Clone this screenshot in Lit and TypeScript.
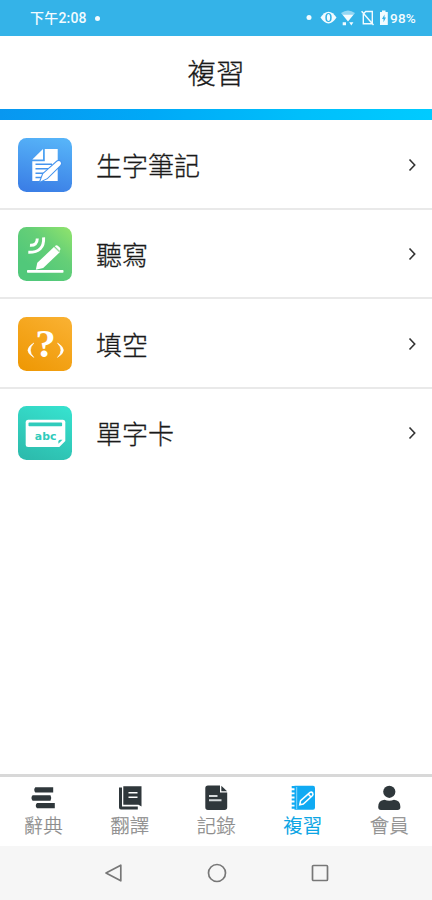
import { LitElement, html, css, svg } from "lit";
import { customElement } from "lit/decorators.js";
import { classMap } from "lit/directives/class-map.js";

const pencilNote = html`<svg class="tile" viewBox="0 0 54 54">
  <defs><linearGradient id="g" x1="0.6" y1="0" x2="0.4" y2="1"><stop offset="0" stop-color="#56b3f8"/><stop offset="1" stop-color="#3b7fe6"/></linearGradient></defs>
  <rect width="54" height="54" rx="8.5" fill="url(#g)"/>
  <path d="M14.3 23.2V43H39.7V11H26.8V23.2Z" fill="#fff"/>
  <path d="M14.3 21.4L25 11V21.4Z" fill="#fff"/>
  <path d="M17.5 26.2H34M17.5 30.7H30M17.5 35.2H26M17.5 39.5H23" stroke="#4594ee" stroke-width="1.5"/>
  <path d="M22.3 43.4L25.1 36.1L39.2 23.4Q41.3 22.2 42.6 24Q43.7 25.8 42.2 27.2L29 40.2Z" fill="#fff" stroke="#4594ee" stroke-width="2.2" paint-order="stroke"/>
</svg>`;

const dictation = html`<svg class="tile" viewBox="0 0 54 54">
  <defs><linearGradient id="g" x1="1" y1="0" x2="0.3" y2="0.8"><stop offset="0" stop-color="#92e46c"/><stop offset="0.5" stop-color="#65cf77"/><stop offset="1" stop-color="#51c87a"/></linearGradient></defs>
  <rect width="54" height="54" rx="8.5" fill="url(#g)"/>
  <g fill="none" stroke="#fff" stroke-width="3"><path d="M12 18.3Q19.2 18.8 19.3 11.5"/><path d="M10.3 25.3Q26.5 25.6 25.6 10.3"/></g>
  <path d="M17.8 42.8L19.3 35.8L36.2 19.8L42 25L25.2 41Z" fill="#fff"/>
  <path d="M36.8 19.2L37.7 18.4Q38.8 17.8 39.8 18.7L42 20.8Q43 22 42 23.2L41.8 24Z" fill="#fff"/>
  <path d="M36 20.2L41.2 25.2" stroke="#76d474" stroke-width=".5"/>
  <rect x="9" y="43" width="36.5" height="2.8" rx=".8" fill="#fff"/>
</svg>`;

const blank = html`<svg class="tile" viewBox="0 0 54 54">
  <defs><linearGradient id="g" x1="0.8" y1="0" x2="0.2" y2="1"><stop offset="0" stop-color="#f9b030"/><stop offset="0.5" stop-color="#f4a41a"/><stop offset="1" stop-color="#ef9906"/></linearGradient></defs>
  <rect width="54" height="54" rx="8.5" fill="url(#g)"/>
  <text class="question" x="27.4" y="39.5" text-anchor="middle">?</text>
  <path d="M15.8 26Q4 33.3 15.8 40.4Q8.8 33.3 15.8 26ZM39.5 26Q51.3 33.3 39.5 40.4Q46.5 33.3 39.5 26Z" fill="#fff" stroke="#fff" stroke-width=".6"/>
</svg>`;

const card = html`<svg class="tile" viewBox="0 0 54 54">
  <defs><linearGradient id="g" x1="0.7" y1="0" x2="0.3" y2="1"><stop offset="0" stop-color="#36e0cd"/><stop offset="1" stop-color="#2dbcad"/></linearGradient></defs>
  <rect width="54" height="54" rx="8.5" fill="url(#g)"/>
  <path d="M10.2 13.7H44.8Q47.3 13.7 47.3 16.2V35L41.3 41H10.2Q7.7 41 7.7 38.5V16.2Q7.7 13.7 10.2 13.7Z" fill="#fff"/>
  <rect x="10.5" y="16.6" width="33.6" height="3.7" rx=".8" fill="#30cbbb"/>
  <text class="abc" x="27.6" y="34" text-anchor="middle" textLength="21.5" lengthAdjust="spacingAndGlyphs">abc</text>
  <path d="M40.4 37.8V35.5Q40.4 33.7 42.2 33.7H44.5Z" fill="#30cbbb"/>
</svg>`;

const rows = [
  { icon: pencilNote, label: "生字筆記" },
  { icon: dictation, label: "聽寫" },
  { icon: blank, label: "填空" },
  { icon: card, label: "單字卡" },
];

const tabs = [
  {
    label: "辭典",
    icon: svg`<path d="M5.3 2.2H23.2V7.5H5.3Q3.2 4.8 5.3 2.2ZM2.6 10.3H20.5Q22 13 20.5 15.7H2.6Q.3 13 2.6 10.3ZM7 18H24.8V23.3H7Q4.5 20.7 7 18Z"/>`,
  },
  {
    label: "翻譯",
    icon: svg`<path d="M2 2.5H5V21.6H20.8V24.5H4Q2 24.5 2 22.5Z"/><path d="M6.3 1.2H24.5V21.5L21.5 19.8H6.3Z"/><path class="cut" d="M11.5 7.8H20.5M11.5 12.2H20.5"/>`,
  },
  {
    label: "記錄",
    icon: svg`<path d="M5 .5H17V7.5H24.2V22.3Q24.2 25 21.5 25H5Q2.3 25 2.3 22.3V3.2Q2.3.5 5 .5Z"/><path d="M18.3.8L24.1 6.3H18.3Z"/><path class="cut lines" d="M6 11H14.5M6 15.3H18.5"/>`,
  },
  {
    label: "複習",
    active: true,
    icon: svg`<path d="M4.5.8H23Q25 .8 25 3V22.5Q25 24.8 23 24.8H4.5Z"/><path class="rings" d="M1.7 2.2H6M1.7 6.3H6M1.7 10.4H6M1.7 14.5H6M1.7 18.6H6M1.7 22.7H6"/><path class="cut thin" d="M6.7 2V24"/><path class="cut pen" d="M9.7 19.8L10.6 15.7L20 7.4Q21.7 6.6 22.7 8Q23.5 9.5 22.3 10.7L13.3 19ZM18.3 9L21 12"/>`,
  },
  {
    label: "會員",
    icon: svg`<circle cx="13.3" cy="6.8" r="6.1"/><path d="M8.5 14.8Q13.3 16.8 18 14.8Q24.4 15.3 24.4 22Q24.4 25 21.5 25H5Q2.2 25 2.2 22Q2.2 15.3 8.5 14.8Z"/>`,
  },
];

@customElement("menu-row")
class MenuRow extends LitElement {
  static properties = { icon: { attribute: false }, label: {} };
  declare icon: unknown;
  declare label: string;
  static styles = css`
    :host { display: flex; align-items: center; box-sizing: border-box; height: 89.5px; padding: 1px 16px 0 18px; border-bottom: 2px solid #e9e9e9; }
    :host(:last-of-type) { border-bottom-color: transparent; }
    .tile { width: 54px; height: 54px; flex: none; }
    .label { flex: 1; margin-left: 24px; font-size: 26px; font-weight: 300; line-height: 38px; color: #1a1a1a; -webkit-text-stroke: .3px #1a1a1a; }
    .chevron { width: 8px; height: 14px; fill: none; stroke: #333; stroke-width: 1.6; }
    .question { font: bold 41px "Liberation Serif", serif; fill: #fff; }
    .abc { font: bold 11px "DejaVu Sans", sans-serif; fill: #30cbbb; }
  `;
  render() {
    return html`${this.icon}<span class="label">${this.label}</span>
      <svg class="chevron" viewBox="0 0 8 14"><path d="M1.5 1.5L6.7 7L1.5 12.5"/></svg>`;
  }
}

@customElement("app-root")
class AppRoot extends LitElement {
  static styles = css`
    :host { display: flex; flex-direction: column; width: 432px; height: 900px; background: #fff; font-family: "Noto Sans CJK TC", sans-serif; overflow: hidden; }
    .status { height: 35.5px; flex: none; box-sizing: border-box; display: flex; align-items: center; padding: 1px 16px 0 30px; background: #34b3e8; color: #f2fbff; font: 500 14px/20px Roboto, "Noto Sans CJK TC", sans-serif; }
    .clock { letter-spacing: .2px; }
    .dot { width: 5px; height: 5px; border-radius: 50%; background: #f2fbff; margin-left: 8px; }
    .glyphs { width: 84px; height: 20px; margin-left: auto; }
    .percent { font-size: 13.5px; letter-spacing: .2px; }
    .title { height: 73.5px; flex: none; box-sizing: border-box; padding-bottom: 2px; display: flex; align-items: center; justify-content: center; font-size: 28.5px; font-weight: 300; color: #1a1a1a; -webkit-text-stroke: .3px #1a1a1a; }
    .stripe { height: 11.4px; flex: none; background: linear-gradient(90deg, #0897f0, #00a9f7 35%, #00bffb 70%, #00cbff); }
    .list { flex: 1; }
    menu-row { width: 100%; }
    .tabs { display: grid; grid-template-columns: repeat(5, 86.5px); height: 71.5px; box-sizing: border-box; flex: none; border-top: 3px solid #d8d8d8; }
    .tab { display: flex; flex-direction: column; align-items: center; padding-top: 8px; font-size: 19.5px; font-weight: 300; line-height: 27px; color: #8c8c8c; -webkit-text-stroke: .25px #8c8c8c; }
    .tab svg { width: 26px; height: 26px; fill: #2f373b; }
    .cut { stroke: #fff; stroke-width: 1.5; fill: none; }
    .lines { stroke: #d5d9db; stroke-width: 2; }
    .thin { stroke-width: .5; }
    .pen { stroke-width: 1.5; }
    .tab.active { color: #0da5e4; font-weight: 400; -webkit-text-stroke: 0; }
    .tab.active svg { fill: #10aaf3; }
    .rings { stroke: #10aaf3; stroke-width: 2.2; }
    .system { height: 54.5px; flex: none; display: flex; align-items: center; justify-content: center; gap: 83px; padding-left: 1px; background: #f6f6f6; }
    .system svg { width: 20px; height: 20px; fill: none; stroke: #777; stroke-width: 1.7; stroke-linejoin: round; }
  `;
  render() {
    return html`
      <div class="status">
        <span class="clock">下午2:08</span><i class="dot"></i>
        <svg class="glyphs" viewBox="0 0 84 20" fill="#f2fbff">
          <circle cx="3" cy="9.5" r="2.5"/>
          <path d="M14.5 9.5Q18 4 22.5 3.7Q27 4 30.5 9.5Q27 15 22.5 15.5Q18 15 14.5 9.5Z"/>
          <ellipse cx="22.5" cy="9.5" rx="3.2" ry="4.6" fill="#34b3e8"/><ellipse cx="22.5" cy="9.5" rx="1.6" ry="3.5"/>
          <path d="M35 5Q42 0 49 5L47.5 7H36.5Z" opacity=".5"/>
          <path d="M36.5 6.7H47.5L42 13.5ZM36.7 14.2H40V17.3H36.7ZM43.2 14.2L47.4 14.2L45.3 17.5Z"/>
          <path d="M57.3 6V15.8H66.3V3.5H59.7L57.3 6M55.6 3.2L67.5 17" fill="none" stroke="#f2fbff" stroke-width="1.4"/>
          <path d="M74 4H76V2.5H79.5V4H81.8V17H74Z"/>
          <path d="M78.5 6.5L76 11H77.5V14.3L80 9.5H78.5Z" fill="#34b3e8"/>
        </svg><span class="percent">98%</span>
      </div>
      <div class="title">複習</div>
      <div class="stripe"></div>
      <div class="list">${rows.map((r) => html`<menu-row .icon=${r.icon} .label=${r.label}></menu-row>`)}</div>
      <div class="tabs">
        ${tabs.map((t) => html`<div class=${classMap({ tab: true, active: !!t.active })}>
          <svg viewBox="0 0 26 26">${t.icon}</svg><span>${t.label}</span></div>`)}
      </div>
      <div class="system">
        <svg viewBox="0 0 20 20"><path d="M2 10L16.8 2.2V17.8Z"/></svg>
        <svg viewBox="0 0 20 20"><circle cx="10" cy="10" r="8.5"/></svg>
        <svg viewBox="0 0 20 20"><rect x="2.5" y="2.5" width="15" height="15" rx="1"/></svg>
      </div>`;
  }
}
